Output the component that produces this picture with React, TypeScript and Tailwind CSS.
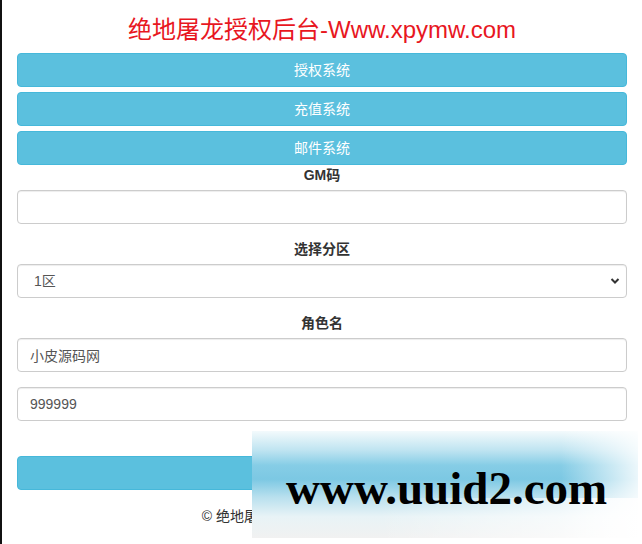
// 绝地屠龙授权后台 — GM 邮件发送页

import React from 'react';

const FONT = "font-['Liberation_Sans','Noto_Sans_CJK_SC',sans-serif]";

const NAV_ITEMS = ['授权系统', '充值系统', '邮件系统'];

function NavButton({ label }: { label: string }): React.JSX.Element {
  return (
    <button
      type="button"
      className="h-[34px] w-full rounded-[4px] border border-[#46b8da] bg-[#5bc0de] text-[14px] leading-[20px] text-white"
    >
      {label}
    </button>
  );
}

function Label({ children }: { children: React.ReactNode }): React.JSX.Element {
  return <label className="mb-[5px] block text-center text-[14px] font-bold leading-[20px] text-[#333]">{children}</label>;
}

const inputCls =
  'block h-[34px] w-full rounded-[4px] border border-[#ccc] bg-white px-[12px] text-[14px] text-[#555] shadow-[inset_0_1px_1px_rgba(0,0,0,0.075)] outline-none';

export default function App(): React.JSX.Element {
  return (
    <div className={`relative flex min-h-[544px] w-[642px] bg-white ${FONT}`}>
      {/* 왼쪽 검은 테두리 */}
      <div className="w-[2px] shrink-0 bg-[#111]" />

      <div className="flex-1 px-[15px] pt-[17px]">
        <h1 className="mb-[10px] text-center text-[24px] leading-[26px] text-[#e8171f]">绝地屠龙授权后台-Www.xpymw.com</h1>

        <div className="flex flex-col gap-[5px]">
          {NAV_ITEMS.map((n) => (
            <NavButton key={n} label={n} />
          ))}
        </div>

        <form className="mt-0" onSubmit={(e) => e.preventDefault()}>
          <div className="mb-[15px]">
            <Label>GM码</Label>
            <input type="text" className={inputCls} defaultValue="" />
          </div>

          <div className="mb-[15px]">
            <Label>选择分区</Label>
            <div className="relative">
              <select className={`${inputCls} appearance-none pl-[16px]`} defaultValue="1">
                <option value="1">1区</option>
                <option value="2">2区</option>
              </select>
              <svg
                className="pointer-events-none absolute right-[7px] top-[13px]"
                width="10"
                height="8"
                viewBox="0 0 10 8"
              >
                <path d="M1.5 2 L5 5.5 L8.5 2" stroke="#333" strokeWidth="2" fill="none" />
              </svg>
            </div>
          </div>

          <div className="mb-[15px]">
            <Label>角色名</Label>
            <input type="text" className={inputCls} defaultValue="小皮源码网" />
          </div>

          <div className="mb-[35px]">
            <input type="text" className={inputCls} defaultValue="999999" />
          </div>

          <button
            type="submit"
            className="h-[34px] w-full rounded-[4px] border border-[#46b8da] bg-[#5bc0de] text-[14px] text-white"
          >
            发送邮件
          </button>
        </form>

        <p className="mt-[16px] text-center text-[14px] leading-[20px] text-[#333]">© 绝地屠龙授权后台-Www.xpymw.com</p>
      </div>

      {/* 워터마크 */}
      <div className="absolute left-[252px] top-[431px] h-[107px] w-[386px] overflow-hidden bg-[linear-gradient(to_bottom,#f3fafc_0%,#bfe4f1_18%,#86cde6_32%,#7cc8e3_45%,#b9e0ee_62%,#e8f3f6_80%,#f1f1f1_100%)]">
        <div className="absolute inset-0 bg-[linear-gradient(to_right,rgba(255,255,255,0)_0%,rgba(255,255,255,0)_80%,rgba(255,255,255,0.85)_100%)]" />
        <div className="absolute bottom-0 right-0 h-[40px] w-[260px] bg-[linear-gradient(to_right,rgba(255,255,255,0),rgba(255,255,255,0.9))]" />
        <div className="absolute left-[34px] top-[30px] font-['Liberation_Serif',serif] text-[47px] font-bold leading-[54px] text-black">
          www.uuid2.com
        </div>
      </div>
    </div>
  );
}
